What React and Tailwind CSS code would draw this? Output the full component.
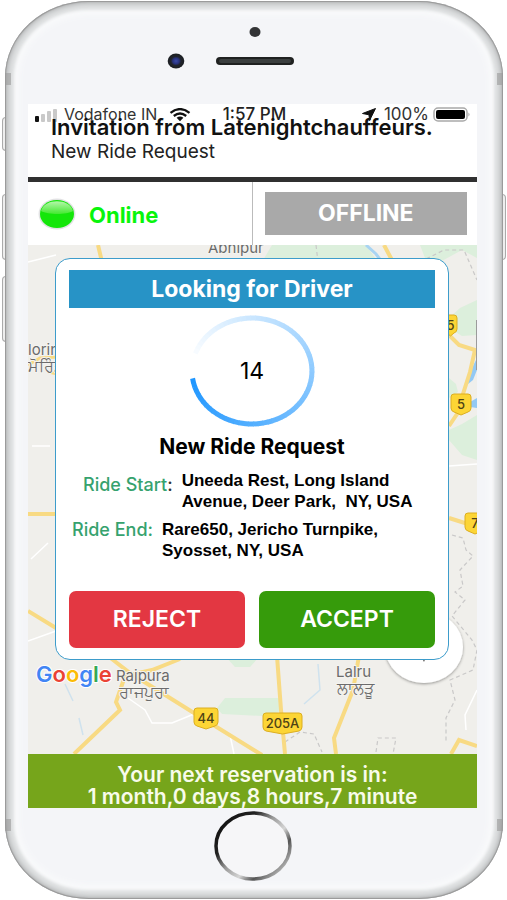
import React from 'react'

const RING_STEPS = 72

function PhoneTop() {
  return (
    <svg className="mx-auto block" width="240" height="104" viewBox="0 0 240 104" aria-hidden="true">
      <defs>
        <radialGradient id="lens">
          <stop offset="0" stopColor="#3a4aa8" />
          <stop offset="0.4" stopColor="#26307a" />
          <stop offset="0.6" stopColor="#20242c" />
          <stop offset="1" stopColor="#1b1e22" />
        </radialGradient>
      </defs>
      <ellipse cx="122" cy="31" rx="5.5" ry="5" fill="#333436" />
      <ellipse cx="43" cy="60" rx="8.3" ry="7.5" fill="url(#lens)" />
      <rect x="83" y="56" width="78" height="8" rx="4" fill="#1f2121" />
      <rect x="86" y="58" width="72" height="4" rx="2" fill="#3b3f3f" />
    </svg>
  )
}

function StatusBar() {
  return (
    <div className="grid h-[21px] grid-cols-[1fr_auto_1fr] items-center px-[6px] text-[17px] leading-[21px] text-[#333]">
      <div className="flex items-center">
        <svg width="26" height="16" viewBox="0 0 26 16" aria-hidden="true">
          <rect x="1" y="9" width="4" height="6" rx="1" fill="#111" />
          <rect x="7" y="7" width="4" height="8" rx="1" fill="#c9c9c9" />
          <rect x="13" y="4" width="4" height="11" rx="1" fill="#c9c9c9" />
          <rect x="19" y="2" width="4" height="13" rx="1" fill="#c9c9c9" />
        </svg>
        <span className="ml-1 text-[16px]">Vodafone IN</span>
        <svg className="ml-3" width="22" height="14" viewBox="0 0 22 14" aria-hidden="true">
          <g fill="none" stroke="#111" strokeWidth="2.3">
            <path d="M1.5 4.8 Q11 -2.6 20.5 4.8" />
            <path d="M4.8 8 Q11 3 17.2 8" />
          </g>
          <path d="M7.6 9.8 Q11 7.3 14.4 9.8 L11 13.2 Z" fill="#111" />
        </svg>
      </div>
      <span className="pl-1 font-medium text-[#222]">1:57 PM</span>
      <div className="flex items-center justify-end">
        <svg width="14" height="13" viewBox="0 0 14 13" aria-hidden="true">
          <path d="M13.5 0.5 L0.5 5.5 L7 6.8 L7.5 12.5 Z" fill="#111" stroke="#111" strokeLinejoin="round" />
        </svg>
        <span className="ml-2">100%</span>
        <svg className="ml-1" width="38" height="15" viewBox="0 0 38 15" aria-hidden="true">
          <rect x="1" y="1" width="33" height="13" rx="4" fill="#fff" stroke="#a9a9a9" strokeWidth="1.5" />
          <rect x="3" y="3" width="29" height="9" rx="2" fill="#000" />
          <path d="M35.5 5.5 Q37.5 7.5 35.5 9.5 Z" fill="#999" />
        </svg>
      </div>
    </div>
  )
}

function RoadBadge({ x, y, w, label }) {
  return (
    <g transform={`translate(${x} ${y})`}>
      <path
        d={`M3 0 H${w - 3} Q${w} 0 ${w} 3 V14 Q${w} 17 ${w - 3} 18 L${w / 2} 21 L3 18 Q0 17 0 14 V3 Q0 0 3 0 Z`}
        fill="#fcd535"
        stroke="#dcae20"
      />
      <text x={w / 2} y="15" textAnchor="middle" fontSize="13" fontWeight="500" fill="#4d4216">
        {label}
      </text>
    </g>
  )
}

function MapBackground() {
  return (
    <svg
      className="absolute inset-0 h-full w-full"
      viewBox="28 245 449 509"
      preserveAspectRatio="xMidYMid slice"
      aria-hidden="true"
    >
      <defs>
        <filter id="knobShadow" x="-20%" y="-20%" width="140%" height="140%">
          <feDropShadow dx="0" dy="1" stdDeviation="1.5" floodOpacity="0.4" />
        </filter>
      </defs>
      <rect x="28" y="245" width="449" height="509" fill="#f0efeb" />
      {/* Green areas */}
      <g fill="#dcefdc">
        <path d="M272 245 H366 L378 262 H262 Z" />
        <path d="M420 245 H477 V258 L462 250 L440 262 L425 258 Z" />
        <path d="M449 318 L460 308 L477 300 V335 L462 336 L449 328 Z" />
        <path d="M449 378 L456 384 L458 392 L449 398 Z" />
        <path d="M449 430 L462 424 L477 415 V460 L462 455 L449 440 Z" />
        <path d="M217 708 L225 698 H281 L279 712 L262 716 L222 714 Z" />
        <path d="M225 656 H260 L250 667 H235 Z" />
      </g>
      {/* Water */}
      <g fill="none" stroke="#a8d4f2" strokeWidth="1.5">
        <path d="M366 245 L376 254 L382 262" strokeWidth="3" />
        <path d="M65 684 L73 701 M79 718 L83 735" stroke="#cfe2ee" />
        <path d="M318 664 L320 690 L304 704" stroke="#cfe2ee" />
      </g>
      <path d="M477 358 L469 374 L468 384 L473 380 L477 370 Z M470 402 L477 398 V408 L470 407 Z" fill="#93c9f4" />
      {/* Minor roads */}
      <g fill="none" stroke="#fff" strokeWidth="1.5">
        <path d="M28 262 L56 255 M32 446 H50 M31 559 L48 543 M28 641 L56 631" />
        <path d="M128 698 L145 710 L152 723 L172 723 L194 714 M234 754 L230 735" />
        <path d="M477 690 L465 715 L466 730 M449 466 L477 464" />
      </g>
      {/* District borders */}
      <g fill="none" stroke="#c9c8c8" strokeWidth="1.2" strokeDasharray="4 3">
        <path d="M316 245 L318 262 M420 262 L444 250 L464 250 L477 280" />
        <path d="M452 535 L463 538 L466 550 L473 556 L460 570 L463 586 L455 592 L465 600 L452 616 L472 640 L477 650 L473 670 L450 680 L455 700 L446 718 L446 742" />
        <path d="M285 742 L300 732 L314 734 L322 752 M376 752 L378 738 L396 738 L393 754" />
      </g>
      {/* Highways */}
      <g fill="none" stroke="#f8da83" strokeWidth="4">
        <path d="M98 245 L102 262 M384 245 L393 262" />
        <path d="M28 365 L40 358 L58 357 M48 372 L58 374" strokeWidth="3" />
        <path d="M28 514 H56 M28 611 L56 628" />
        <path d="M108 656 L130 673 L194 713 L262 755" />
        <path d="M180 659 L152 670 L125 676 L116 702 L120 710 L74 754" />
        <path d="M277 656 L281 710 L285 754" />
        <path d="M359 656 L353 690 L334 738 L336 754" />
        <path d="M451 754 L459 740 L477 746" />
        <path d="M449 335 L459 345 L475 350 L470 372 L463 394 L461 408 L449 426" />
        <path d="M449 518 L468 524" />
      </g>
      {/* Place names */}
      <g fill="#6b6b6b" fontSize="15" stroke="#f4f3ef" strokeWidth="2" paintOrder="stroke">
        <text x="208" y="253">Abhipur</text>
        <text x="28" y="355">lorinda</text>
        <text x="28" y="372" fontSize="16">ਮੋਰਿੰਡਾ</text>
        <text x="116" y="681">Rajpura</text>
        <text x="119" y="698" fontSize="16">ਰਾਜਪੁਰਾ</text>
        <text x="336" y="677">Lalru</text>
        <text x="337" y="694" fontSize="16">ਲਾਲੜੂ</text>
      </g>
      <RoadBadge x={444} y={315} w={13} label="5" />
      <RoadBadge x={451} y={394} w={20} label="5" />
      <RoadBadge x={465} y={513} w={20} label="7" />
      <RoadBadge x={194} y={708} w={24} label="44" />
      <RoadBadge x={263} y={713} w={39} label="205A" />
      <rect x="476" y="320" width="2" height="50" fill="#9b9b9b" />
      {/* Compass knob */}
      <ellipse cx="424" cy="647" rx="39" ry="36" fill="#fff" filter="url(#knobShadow)" />
      <path d="M419 650 L424 662 L428 650 Z" fill="#333" />
      {/* Map provider */}
      <text x="36" y="682" fontSize="22" fontWeight="600" stroke="#fff" strokeWidth="2" paintOrder="stroke">
        <tspan fill="#4285f4">G</tspan>
        <tspan fill="#ea4335">o</tspan>
        <tspan fill="#fbbc05">o</tspan>
        <tspan fill="#4285f4">g</tspan>
        <tspan fill="#34a853">l</tspan>
        <tspan fill="#ea4335">e</tspan>
      </text>
    </svg>
  )
}

function Countdown({ seconds }) {
  const point = (step) => {
    const angle = ((172 - (step * 332) / RING_STEPS) * Math.PI) / 180
    return `${63 + 60 * Math.cos(angle)} ${56 + 53 * Math.sin(angle)}`
  }

  return (
    <div className="relative mx-auto mt-[7px] h-[112px] w-[126px]">
      <svg className="h-full w-full" viewBox="0 0 126 112" aria-hidden="true">
        {Array.from({ length: RING_STEPS }, (_, i) => (
          <path
            key={i}
            d={`M${point(i)} L${point(i + 1.15)}`}
            fill="none"
            stroke={`hsl(208 100% ${56 + (i / RING_STEPS) * 43}%)`}
            strokeWidth="5"
          />
        ))}
      </svg>
      <span className="absolute inset-0 flex items-center justify-center text-[23px] text-black">{seconds}</span>
    </div>
  )
}

function RideCard() {
  return (
    <section className="relative rounded-[15px] border border-[#3d9ccb] bg-white px-[13px] py-[11px]">
      <h2 className="bg-[#2793c6] text-center text-[23px] leading-[38px] font-bold text-white">Looking for Driver</h2>
      <Countdown seconds={14} />
      <h3 className="mt-[6px] text-center text-[21px] leading-[28px] font-bold text-black">New Ride Request</h3>

      <dl className="mt-[9px] text-[17px] leading-[21px]">
        <div className="flex gap-[9px] pl-[14px]">
          <dt className="mt-1 shrink-0 text-[18px] font-medium text-[#36a26e]">
            Ride Start<span className="text-[#333]">:</span>
          </dt>
          <dd className="font-['Liberation_Sans',Arial,sans-serif] font-bold text-black">
            Uneeda Rest, Long Island
            <br />
            Avenue, Deer Park,&nbsp; NY, USA
          </dd>
        </div>
        <div className="mt-[7px] flex gap-[9px] pl-[3px]">
          <dt className="shrink-0 text-[18px] font-medium text-[#36a26e]">Ride End:</dt>
          <dd className="font-['Liberation_Sans',Arial,sans-serif] font-bold text-black">
            Rare650, Jericho Turnpike,
            <br />
            Syosset, NY, USA
          </dd>
        </div>
      </dl>

      <div className="mt-[30px] grid grid-cols-2 gap-[14px] text-[23px] font-semibold text-white">
        <button type="button" className="h-[57px] rounded-[7px] bg-[#e33742]">REJECT</button>
        <button type="button" className="h-[57px] rounded-[7px] bg-[#369b0b]">ACCEPT</button>
      </div>
    </section>
  )
}

function OnlineLight() {
  return (
    <svg width="38" height="32" viewBox="0 0 38 32" aria-hidden="true">
      <defs>
        <linearGradient id="gloss" x1="0" y1="0" x2="0" y2="1">
          <stop offset="0" stopColor="#b5f5ab" />
          <stop offset="1" stopColor="#43ea30" />
        </linearGradient>
      </defs>
      <ellipse cx="19" cy="16" rx="18.5" ry="15.5" fill="#e2e2e4" />
      <ellipse cx="19" cy="16" rx="17" ry="14" fill="#14e60a" />
      <path d="M3 13 C6 0 32 0 35 13 C29 17 10 17 3 13 Z" fill="url(#gloss)" />
    </svg>
  )
}

function HomeButton() {
  return (
    <svg className="mx-auto block" width="78" height="72" viewBox="0 0 78 72" aria-hidden="true">
      <defs>
        <linearGradient id="homeRing" gradientUnits="userSpaceOnUse" x1="4" y1="14" x2="62" y2="68">
          <stop offset="0" stopColor="#111" />
          <stop offset="0.25" stopColor="#222" />
          <stop offset="0.45" stopColor="#999" />
          <stop offset="0.65" stopColor="#d5d5d5" />
          <stop offset="0.8" stopColor="#555" />
          <stop offset="1" stopColor="#b5b5b5" />
        </linearGradient>
      </defs>
      <ellipse cx="39" cy="36" rx="37" ry="33" fill="#f6f6f8" stroke="url(#homeRing)" strokeWidth="3.5" />
    </svg>
  )
}

export default function App() {
  return (
    <div className="relative min-h-screen bg-white pt-px pr-1 pl-[5px] font-['Inter','Noto_Sans',sans-serif]">
      {/* Side buttons */}
      <div className="absolute top-[117px] left-[2px] h-[34px] w-1 rounded-l-sm border border-[#aaa] bg-[#eee]" />
      <div className="absolute top-[194px] left-[2px] h-[66px] w-1 rounded-l-sm border border-[#aaa] bg-[#eee]" />
      <div className="absolute top-[276px] left-[2px] h-[66px] w-1 rounded-l-sm border border-[#aaa] bg-[#eee]" />
      <div className="absolute top-[194px] right-[1px] h-[66px] w-1 rounded-r-sm border border-[#aaa] bg-[#eee]" />

      <div className="relative rounded-[84px/76px] bg-[#f4f5f8] pr-[26px] pl-[23px] shadow-[inset_0_0_1px_1px_#979797,inset_0_0_4px_3px_#b9bbbc,inset_0_0_3px_9px_#dfe1e2,inset_0_0_6px_14px_#f9fafb]">
        {/* Antenna lines */}
        <div className="absolute top-[72px] left-0 h-3 w-[6px] bg-[#999]/60" />
        <div className="absolute top-[72px] right-0 h-3 w-[6px] bg-[#999]/60" />
        <div className="absolute bottom-[68px] left-0 h-3 w-[6px] bg-[#999]/60" />
        <div className="absolute bottom-[68px] right-0 h-3 w-[6px] bg-[#999]/60" />

        <PhoneTop />

        <main className="-mt-px bg-white">
          <header className="border-b-[5px] border-[#303030] pb-[13px]">
            <StatusBar />
            <div className="-mt-[11px] pl-[23px]">
              <h1 className="text-[22px] leading-[26px] font-semibold whitespace-nowrap text-[#111]">
                Invitation from Latenightchauffeurs.
              </h1>
              <p className="text-[19px] leading-[24px] text-[#222]">New Ride Request</p>
            </div>
          </header>

          <div className="grid grid-cols-2">
            <div className="flex items-center gap-[13px] border-r border-[#bbb] pl-[10px] text-[22px] font-bold text-[#08f50c]">
              <OnlineLight />
              <span className="pt-1">Online</span>
            </div>
            <div className="py-[10px] pr-[10px] pl-[12px]">
              <button type="button" className="h-[43px] w-full bg-[#a9a9a9] text-[23px] font-bold text-white">
                OFFLINE
              </button>
            </div>
          </div>

          <div className="relative overflow-hidden pt-[13px] pr-[28px] pb-[94px] pl-[27px]">
            <MapBackground />
            <RideCard />
          </div>

          <footer className="bg-[#76a51b] pt-[10px] text-center text-[21px] leading-[22px] font-semibold text-[#f8fbea]">
            <p>Your next reservation is in:</p>
            <p>1 month,0 days,8 hours,7 minute</p>
          </footer>
        </main>

        <div className="pt-[2px] pb-[17px]">
          <HomeButton />
        </div>
      </div>
    </div>
  )
}
